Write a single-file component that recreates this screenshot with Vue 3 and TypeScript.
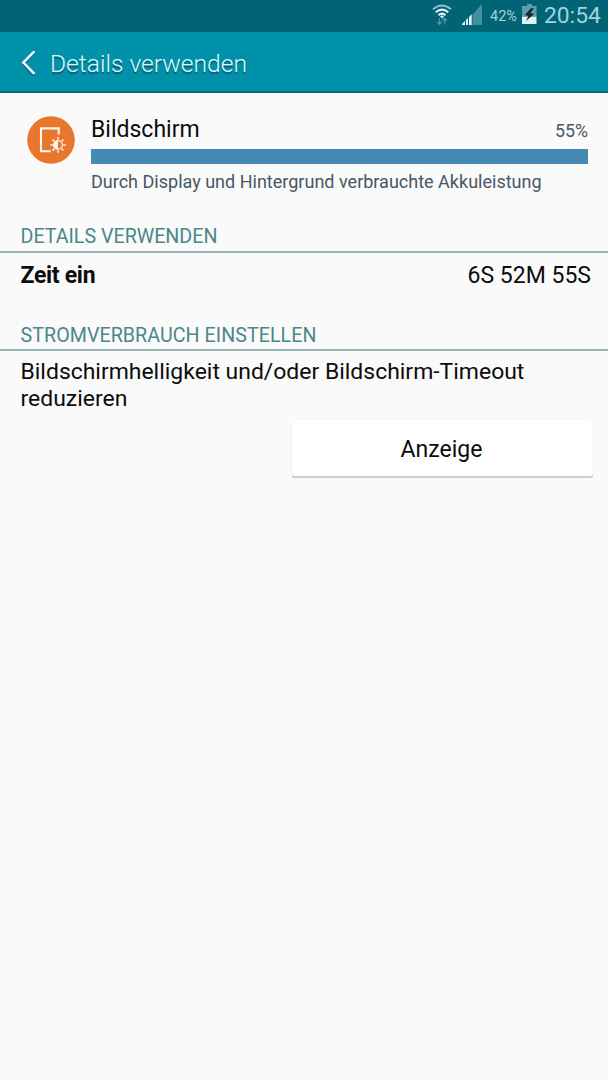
<script setup lang="ts">
const usage = { title: 'Bildschirm', percent: 55, note: 'Durch Display und Hintergrund verbrauchte Akkuleistung' }
const rays: number[] = [0, 45, 90, 135, 180, 225, 270, 315]
</script>

<template>
  <div class="screen">
    <div class="status">
      <svg class="wifi" width="20" height="22" viewBox="0 0 20 22" fill="none">
        <path d="M1 5.2Q10-2.2 19 5.2" stroke="#8fbfc9" stroke-width="2" />
        <path d="M3.8 8.3Q10 3 16.2 8.3M6.5 11.2Q10 8 13.5 11.2" stroke="#e6f7fa" stroke-width="2" />
        <path d="M8 12.3Q10 10.7 12 12.3L10 14.4Z" fill="#e6f7fa" />
        <path d="M7.5 14v6M5.3 17.8l2.2 2.4 2.2-2.4M12.7 20.5v-6M10.5 16.8l2.2-2.4 2.2 2.4" stroke="#4b98a5" stroke-width="1.3" />
      </svg>
      <svg class="signal" width="20" height="21" viewBox="0 0 20 21">
        <path d="M10.5 10.5L20 0V21H10.5Z" fill="#428f9d" />
        <path d="M0 21V20L3 17V21ZM4 21V16L6 14V21ZM7 21V13L9.7 10.3V21Z" fill="#e5f5f7" />
      </svg>
      <span class="battery-text">42%</span>
      <svg class="battery" width="15" height="20" viewBox="0 0 15 20">
        <path d="M5 0h5v2h4.5v10H0V2h5Z" fill="#5c9fac" />
        <path d="M0 12.5h14.5V20H0Z" fill="#e1f2f4" />
        <path d="M9 4.2L3 11l3.4 1L4 17l8-7-3.8-1L12 4.2Z" fill="#13282d" />
      </svg>
      <span class="clock">20:54</span>
    </div>

    <header class="bar">
      <svg class="back" width="16" height="26" viewBox="0 0 16 26" fill="none">
        <path d="M14.4 2L3.4 13.2L14.4 24.4" stroke="#08616f" stroke-width="2.4" transform="translate(0 1)" />
        <path d="M14.4 1.4L3.4 12.6L14.4 23.8" stroke="#e8fcff" stroke-width="2.6" />
      </svg>
      <span class="heading">Details verwenden</span>
    </header>

    <section class="usage">
      <svg class="app-icon" width="48" height="48" viewBox="0 0 48 48" fill="none">
        <circle cx="24" cy="24" r="23.8" fill="#e8762c" />
        <path d="M31.7 18.5V12.4H14V35.2H23.8" stroke="#fff6ea" stroke-width="2.1" />
        <circle cx="31" cy="29" r="4.4" stroke="#fff6ea" stroke-width="1.3" />
        <path d="M31 24.6a4.4 4.4 0 0 0 0 8.8Z" fill="#fff6ea" />
        <path v-for="r in rays" :key="r" d="M31 23.6V21.3" stroke="#fff6ea" stroke-width="1.6" :transform="`rotate(${r} 31 29)`" />
      </svg>
      <div class="usage-body">
        <div class="usage-head">
          <span class="usage-title">{{ usage.title }}</span>
          <span class="usage-percent">{{ usage.percent }}%</span>
        </div>
        <div class="meter"></div>
        <div class="note">{{ usage.note }}</div>
      </div>
    </section>

    <h2 class="section first">DETAILS VERWENDEN</h2>
    <div class="row"><b>Zeit ein</b><span>6S 52M 55S</span></div>
    <h2 class="section second">STROMVERBRAUCH EINSTELLEN</h2>
    <p class="advice">Bildschirmhelligkeit und/oder Bildschirm-Timeout<br />reduzieren</p>
    <button class="action" type="button">Anzeige</button>
  </div>
</template>

<style>
body { margin: 0; background: #fafafa; }
</style>

<style scoped>
.screen { height: 1080px; overflow: hidden; background: #fafafa; color: #0c0c0c; font-family: Roboto, "Liberation Sans", sans-serif; box-sizing: border-box; }
.status { height: 32px; box-sizing: border-box; background: #006475; display: flex; padding-left: 432px; align-items: flex-start; color: #a5d2dc; white-space: nowrap; }
.wifi { margin-top: 4px; }
.signal { margin: 4px 0 0 10px; }
.battery-text { margin-left: 8px; width: 32px; font-size: 14.5px; line-height: 33px; }
.battery { margin-top: 4px; }
.clock { margin-left: 7px; font-size: 22.8px; line-height: 31px; }
.bar { height: 61px; box-sizing: border-box; display: flex; align-items: flex-start; background: #0091aa; border-bottom: 2px solid #08687a; padding-left: 20px; }
.back { margin-top: 18px; }
.heading { margin-left: 14px; font-size: 24.6px; font-weight: 300; line-height: 64px; color: #dcfaff; text-shadow: 0 1.5px 1px #045a69; white-space: nowrap; }
.usage { display: flex; padding: 23px 20px 0 27px; }
.app-icon { flex: none; }
.usage-body { flex: 1; margin-left: 16px; }
.usage-head { display: flex; justify-content: space-between; height: 33px; }
.usage-title { font-size: 23px; line-height: 28px; }
.usage-percent { font-size: 17.8px; line-height: 29px; color: #465766; }
.meter { height: 15px; background: #458ab5; }
.note { height: 30px; font-size: 18.03px; line-height: 36px; color: #465766; white-space: nowrap; }
.section { margin: 0; box-sizing: border-box; height: 33px; padding-left: 20.5px; border-bottom: 2px solid #99b4b3; font-size: 19.65px; font-weight: 400; line-height: 34px; color: #4b8789; white-space: nowrap; }
.first { margin-top: 26px; }
.second { height: 32px; letter-spacing: 0.05px; }
.row { display: flex; justify-content: space-between; height: 66px; padding: 0 17px 0 20.5px; font-size: 23px; line-height: 45px; }
.row b { letter-spacing: -0.3px; }
.advice { margin: 7px 0 0 20.5px; font-size: 22.95px; line-height: 27px; white-space: nowrap; }
.action { display: block; margin: 8px 0 0 292px; width: 301px; height: 56px; padding: 2px 2px 0 0; border: 0; border-radius: 2px; background: #fff; box-shadow: 0 2px 1px -0.5px #ccc, 0 0 1px #ddd; color: #0c0c0c; font: 23px Roboto, sans-serif; }
</style>
